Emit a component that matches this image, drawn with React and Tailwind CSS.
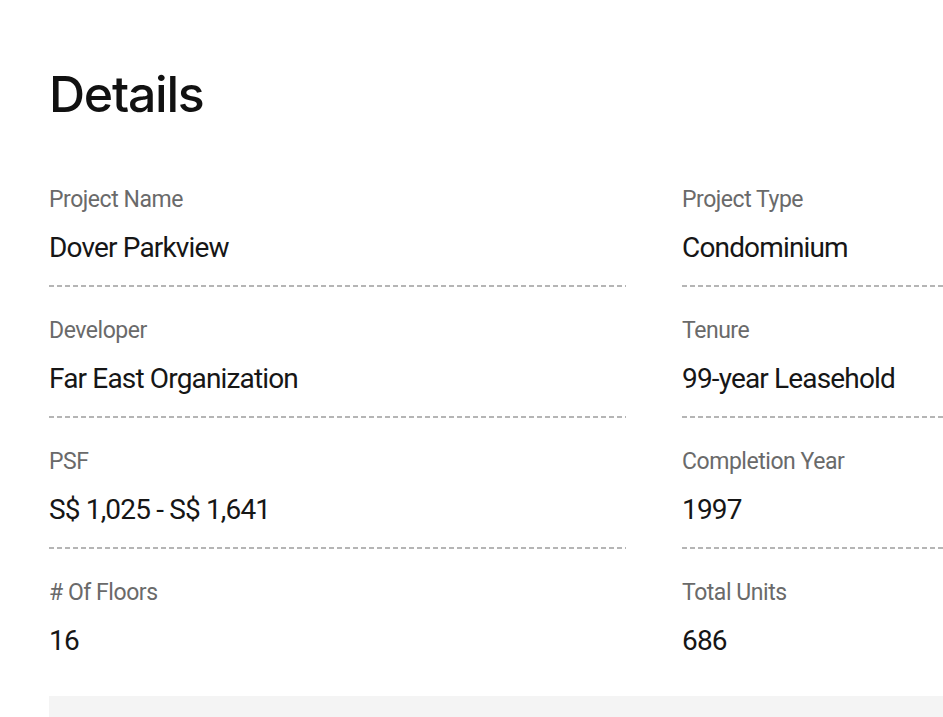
const details = [
    ['Project Name', 'Dover Parkview', 'Project Type', 'Condominium'],
    ['Developer', 'Far East Organization', 'Tenure', '99-year Leasehold'],
    ['PSF', 'S$ 1,025 - S$ 1,641', 'Completion Year', '1997'],
    ['# Of Floors', '16', 'Total Units', '686'],
];

function Field({ label, value, last }) {
    return (
        <div className="flex flex-col">
            <div className="text-[23px] leading-[28px] text-[#6a6a6a] tracking-[-0.02em]">{label}</div>
            <div className="mt-[17px] text-[28px] leading-[34px] text-[#161616] tracking-[-0.03em]">{value}</div>
            {!last && (
                <div className="mt-[20px] h-[2px] w-full bg-[linear-gradient(to_right,#b5b5b5_5px,transparent_5px)] bg-[length:8px_2px]" />
            )}
            <div className={last ? 'h-[38px]' : 'h-[30px]'} />
        </div>
    );
}

export default function App() {
    return (
        <div
            className="h-[717px] w-full overflow-hidden bg-white pl-[49px] pt-[64px]"
            style={{ fontFamily: 'Roboto, "Liberation Sans", sans-serif' }}
        >
            <div className="w-[1210px]">
                <h2
                    className="text-[50px] leading-[60px] font-medium text-[#111] tracking-[-0.025em]"
                    style={{ fontFamily: 'Inter, "Liberation Sans", sans-serif' }}
                >
                    Details
                </h2>

                <div className="mt-[62px] grid grid-cols-[577px_577px] gap-x-[56px]">
                    {details.map(([l1, v1, l2, v2], i) => (
                        <div key={l1} className="contents">
                            <Field label={l1} value={v1} last={i === details.length - 1} />
                            <Field label={l2} value={v2} last={i === details.length - 1} />
                        </div>
                    ))}
                </div>

                {/* grey strip below the table */}
                <div className="h-[40px] w-full bg-[#f4f4f4]" />
            </div>
        </div>
    );
}
